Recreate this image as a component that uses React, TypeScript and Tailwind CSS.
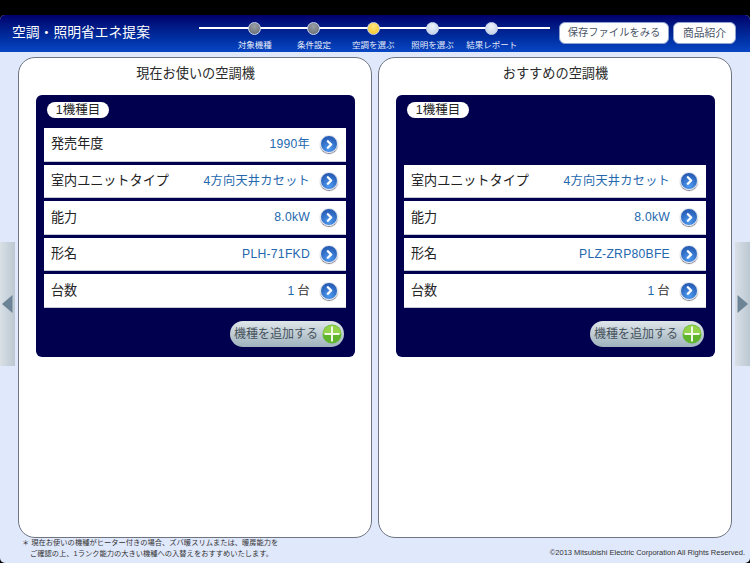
// Air conditioning / lighting energy saving proposal screen
import { ChevronRight } from 'lucide-react'

const JP = { fontFamily: '"Liberation Sans", "Noto Sans CJK JP", sans-serif' }

const STEPS = [
  { label: '対象機種', dot: 'bg-[radial-gradient(circle_at_50%_30%,#9a9ea6,#63686f)]' },
  { label: '条件設定', dot: 'bg-[radial-gradient(circle_at_50%_30%,#9a9ea6,#63686f)]' },
  { label: '空調を選ぶ', dot: 'bg-[radial-gradient(circle_at_50%_30%,#ffe680,#f2c21c)]' },
  { label: '照明を選ぶ', dot: 'bg-[radial-gradient(circle_at_50%_30%,#eef3fb,#bccbe4)]' },
  { label: '結果レポート', dot: 'bg-[radial-gradient(circle_at_50%_30%,#eef3fb,#bccbe4)]' },
]

const CURRENT = [
  { label: '発売年度', value: '1990年' },
  { label: '室内ユニットタイプ', value: '4方向天井カセット' },
  { label: '能力', value: '8.0kW' },
  { label: '形名', value: 'PLH-71FKD' },
  { label: '台数', value: '1', unit: '台' },
]

const RECOMMENDED = [
  null,
  { label: '室内ユニットタイプ', value: '4方向天井カセット' },
  { label: '能力', value: '8.0kW' },
  { label: '形名', value: 'PLZ-ZRP80BFE' },
  { label: '台数', value: '1', unit: '台' },
]

type Row = { label: string; value: string; unit?: string } | null

const Panel = ({ title, rows }: { title: string; rows: Row[] }) => (
  <section className="w-[354px] h-[481px] shrink-0 bg-white border border-[#6f7480] rounded-[17px] pl-[17px] pr-[16px] flex flex-col">
    <h2 className="h-[37px] pt-[6px] text-center text-[13.2px] leading-[20px] font-normal text-[#2b2b2b]">{title}</h2>
    <div className="h-[262px] bg-[#00004f] rounded-[6px] pl-2 pr-[9px] flex flex-col">
      <div className="h-[33px] pt-[7px]">
        <span className="ml-[3px] block w-[62px] h-[16px] rounded-full bg-white text-[12.5px] leading-[16px] text-center text-[#222]">1機種目</span>
      </div>
      <div className="flex flex-col gap-[3px]">
        {rows.map((r, i) =>
          r ? (
            <div key={i} className="h-[33.6px] bg-white flex items-center pl-[7px] pr-[8px] border-b border-[#c7cad6]">
              <span className="text-[13.1px] text-[#222]">{r.label}</span>
              <span className="ml-auto text-[12.2px] text-[#2468ae] tracking-[0.02em]">
                {r.value}
                {r.unit && <span className="ml-[3px] text-[#333]">{r.unit}</span>}
              </span>
              <span className="ml-[10px] w-[18px] h-[18px] rounded-full bg-[radial-gradient(circle_at_50%_80%,#4f9af0,#1a4aa4)] border-[1.5px] border-[#dfe5ee] shadow-[0_1px_1px_#778] flex items-center justify-center">
                <ChevronRight size={13} strokeWidth={4.5} className="text-white" />
              </span>
            </div>
          ) : (
            <div key={i} className="h-[33.6px]" />
          ),
        )}
      </div>
      <div className="mt-[13px] pr-[2px] flex justify-end">
        <div className="w-[114px] h-[26px] pt-[1px] rounded-full bg-gradient-to-b from-[#dfe6ea] to-[#9fb2bd] flex items-center justify-between pl-[4px] pr-[2px] text-[12px] text-[#47525c]">
          機種を追加する
          <svg width="20" height="20" viewBox="0 0 20 20">
            <circle cx="10" cy="10" r="9.5" fill="#5fb62c" />
            <path d="M1 10a9 9 0 0 1 18 0z" fill="#94d24c" />
            <path d="M9 2.5h2v6.5h6.5v2H11v6.5H9V11H2.5V9H9z" fill="#f4f8e8" />
          </svg>
        </div>
      </div>
    </div>
  </section>
)

const SideTab = ({ dir }: { dir: 'left' | 'right' }) => (
  <div className="w-[15px] h-[124px] shrink-0 mt-[185px] bg-gradient-to-r from-[#d9e0e6] to-[#bcc8d2] flex items-center justify-center">
    <svg width="11" height="18" viewBox="0 0 11 18">
      <path d={dir === 'left' ? 'M10.5 0v18L0 9z' : 'M0.5 0v18L11 9z'} fill="#6d8496" />
    </svg>
  </div>
)

export default function App() {
  return (
    <div className="w-[750px] h-[563px] bg-black overflow-hidden flex flex-col" style={JP}>
      <div className="h-[15px] shrink-0 bg-black" />
      <div className="flex-1 rounded-[5px] overflow-hidden bg-[#e0e8fb] flex flex-col">
        <header className="h-[37px] shrink-0 bg-gradient-to-b from-[#00006b] to-[#0a46c4] flex">
          <h1 className="w-[199px] shrink-0 pl-3 pt-[8px] text-[13.8px] leading-[20px] font-normal text-white whitespace-nowrap">空調・照明省エネ提案</h1>
          <div className="relative w-[351px] shrink-0 h-full">
            <div className="absolute left-0 right-0 top-[12px] h-[2px] bg-white" />
            <div className="relative pl-[26px] flex">
              {STEPS.map((s) => (
                <div key={s.label} className="w-[59.3px] flex flex-col items-center">
                  <span className={`mt-[7px] w-[13px] h-[13px] rounded-full border border-[#c8d4ec] ${s.dot}`} />
                  <span className="mt-[4px] text-[8.5px] leading-[12px] text-[#e6edfb] whitespace-nowrap">{s.label}</span>
                </div>
              ))}
            </div>
          </div>
          <div className="ml-[9px] pt-[7px] flex gap-[4px] items-start">
            <div className="w-[110px] h-[22px] rounded-[6px] bg-white border border-[#8fa3cf] text-center text-[10.3px] leading-[20px] text-[#4a5566]">保存ファイルをみる</div>
            <div className="w-[63px] h-[22px] rounded-[6px] bg-white border border-[#8fa3cf] text-center text-[10.8px] leading-[20px] text-[#4a5566]">商品紹介</div>
          </div>
        </header>
        <main className="h-[486px] shrink-0 flex items-start pt-[5px]">
          <SideTab dir="left" />
          <div className="ml-[3px] flex gap-[6px]">
            <Panel title="現在お使いの空調機" rows={CURRENT} />
            <Panel title="おすすめの空調機" rows={RECOMMENDED} />
          </div>
          <div className="ml-auto">
            <SideTab dir="right" />
          </div>
        </main>
        <footer className="flex-1 flex justify-between pl-[22px] pr-[5px]">
          <div className="text-[7.27px] leading-[10.5px] text-[#333] whitespace-nowrap">
            <p>＊ 現在お使いの機種がヒーター付きの場合、ズバ暖スリムまたは、暖房能力を</p>
            <p className="pl-[8px]">ご確認の上、1ランク能力の大きい機種への入替えをおすすめいたします。</p>
          </div>
          <p className="pt-[9px] text-[7.5px] leading-[12px] text-[#333] whitespace-nowrap">©2013 Mitsubishi Electric Corporation All Rights Reserved.</p>
        </footer>
      </div>
    </div>
  )
}
